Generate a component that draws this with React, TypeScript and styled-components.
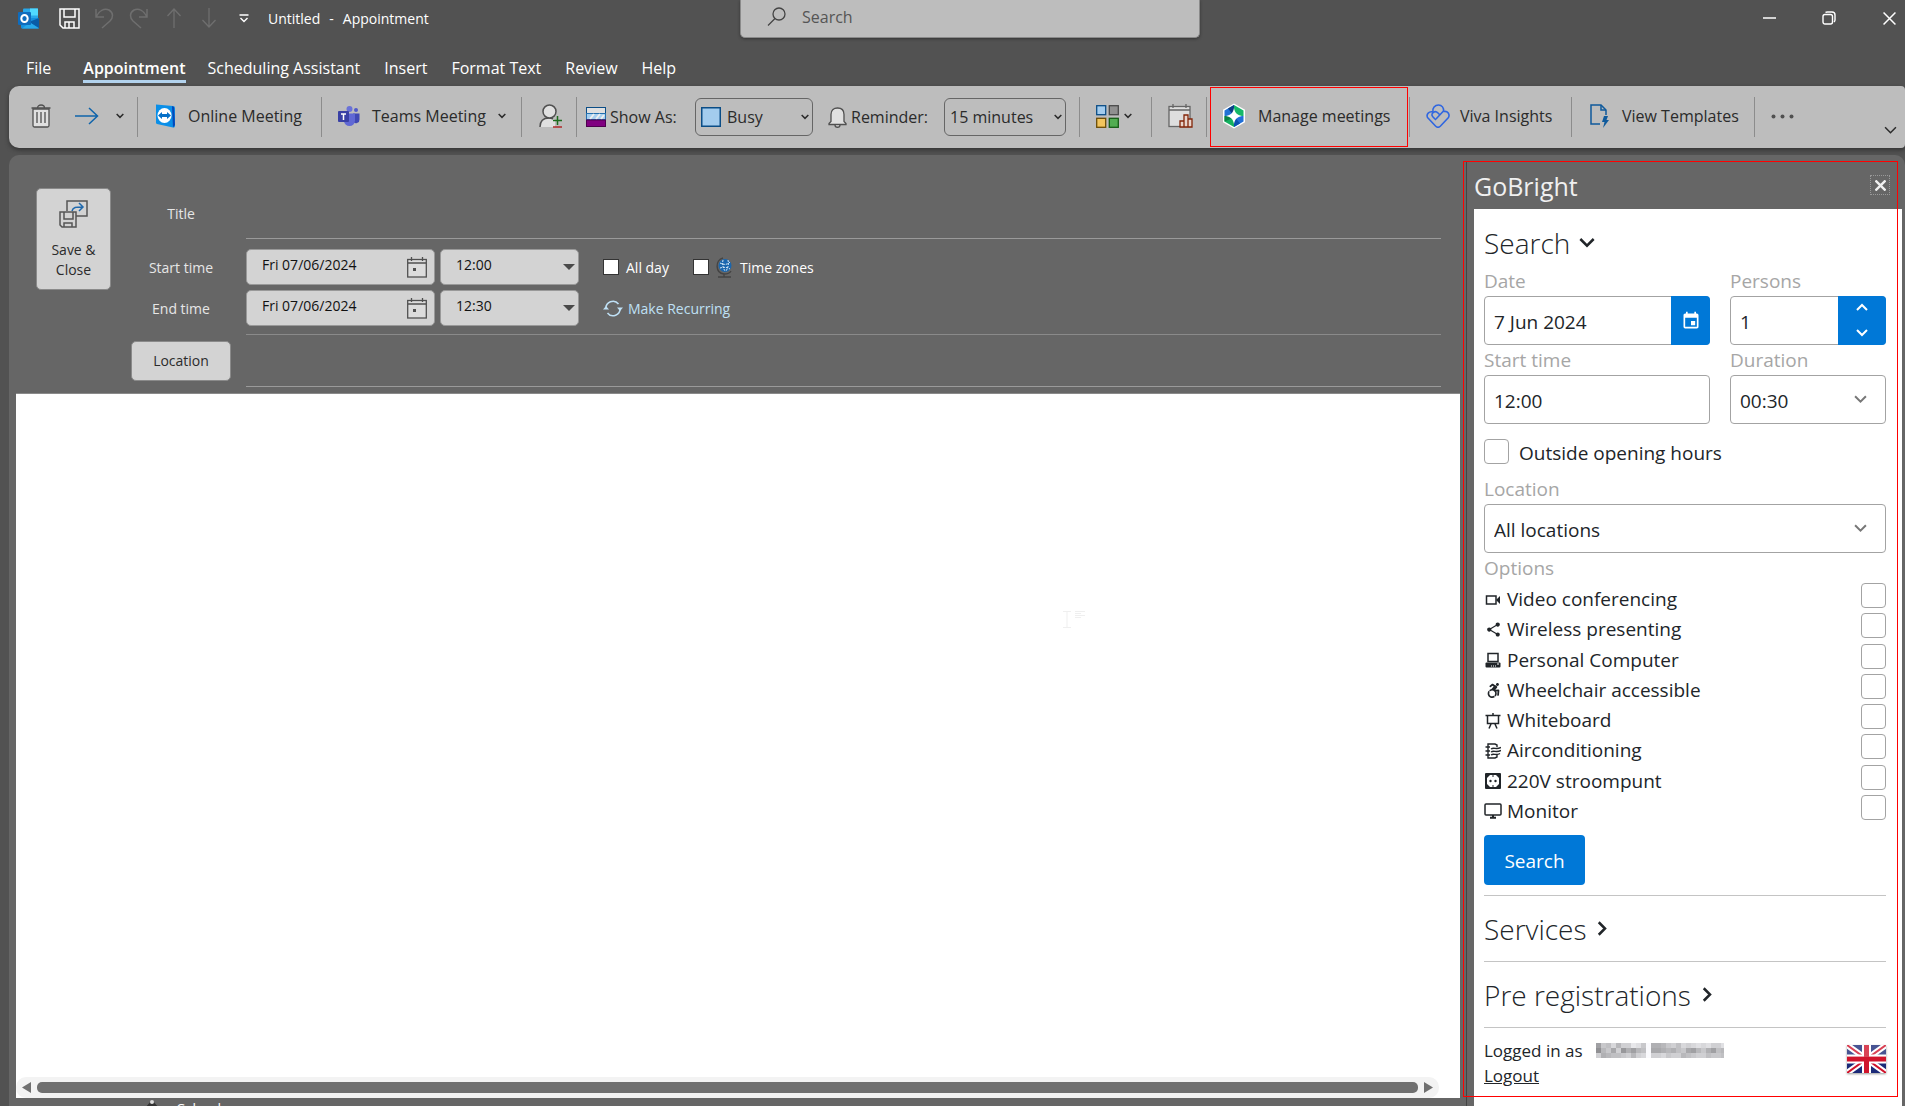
import React from "react";
import styled, { createGlobalStyle, css } from "styled-components";
import { MdShare, MdEvent } from "react-icons/md";
import { FaAccessibleIcon } from "react-icons/fa";

const GlobalStyle = createGlobalStyle`
  *, *::before, *::after { box-sizing: border-box; }
  body {
    margin: 0;
    background: #525252;
    font-family: "Open Sans", "Noto Sans", sans-serif;
    overflow: hidden;
  }
  button, input, select { font: inherit; color: inherit; }
  button { cursor: pointer; }
  svg { display: block; flex: none; }
`;

/* ---------- window frame ---------- */

const Window = styled.div`
  display: flex;
  flex-direction: column;
  height: 100vh;
  overflow: hidden;
  background: #525252;
`;

const TitleBar = styled.header`
  display: grid;
  grid-template-columns: minmax(0, 740fr) 460px minmax(0, 705fr);
  height: 38px;
  color: #fff;
`;

const QuickAccess = styled.div`
  display: flex;
  align-items: center;
  height: 36px;
  padding-left: 18px;
  font-size: 14px;
`;

const PlainButton = styled.button<{ $w: number; $muted?: boolean }>`
  display: flex;
  align-items: center;
  justify-content: center;
  width: ${(p) => p.$w}px;
  height: 30px;
  padding: 0;
  border: 0;
  background: none;
  color: ${(p) => (p.$muted ? "#6f6f6f" : "inherit")};
`;

const WindowTitle = styled.span`
  display: flex;
  gap: 9px;
  margin-left: 19px;
`;

const TopSearch = styled.label`
  display: flex;
  align-items: center;
  gap: 16px;
  height: 38px;
  padding: 0 26px 4px;
  border: 1px solid #8a8a8a;
  border-top: 0;
  border-radius: 0 0 5px 5px;
  background: #bdbdbd;
  color: #444;
  box-shadow: 0 1px 3px #333;
`;

const TopSearchInput = styled.input`
  flex: 1;
  min-width: 0;
  padding: 0;
  border: 0;
  background: none;
  font-size: 16px;
  outline: 0;
  &::placeholder { color: #555; opacity: 1; }
`;

const Caption = styled.div`
  display: flex;
  justify-content: flex-end;
  align-items: center;
  height: 36px;
  margin-right: -14px;
`;

const Tabs = styled.nav`
  display: flex;
  align-items: flex-start;
  height: 48px;
  padding: 16px 0 0 26px;
  gap: 24px;
`;

const Tab = styled.a<{ $active?: boolean }>`
  color: #fff;
  font-size: 16px;
  line-height: 28px;
  height: 29px;
  text-decoration: none;
  ${(p) =>
    p.$active &&
    css`
      margin-left: 8px;
      margin-right: -2px;
      font-weight: 600;
      border-bottom: 3px solid #b3d3ee;
    `}
`;

/* ---------- ribbon ---------- */

const Ribbon = styled.div`
  position: relative;
  display: flex;
  align-items: center;
  height: 62px;
  margin-left: 9px;
  border-radius: 10px 4px 4px 10px;
  background: #bdbdbd;
  color: #2b2b2b;
  font-size: 16px;
  box-shadow: 0 2px 4px #333;
`;

const Group = styled.div<{ $w: number; $pad?: number; $gap?: number }>`
  display: flex;
  align-items: center;
  flex: none;
  width: ${(p) => p.$w}px;
  height: 40px;
  padding-left: ${(p) => p.$pad ?? 16}px;
  gap: ${(p) => p.$gap ?? 12}px;
  border-right: 1px solid #8c8c8c;
`;

const RibbonButton = styled.button<{ $gap?: number }>`
  display: flex;
  align-items: center;
  gap: ${(p) => p.$gap ?? 12}px;
  height: 36px;
  padding: 0 0 2px;
  border: 0;
  background: none;
  white-space: nowrap;
`;

const MoreButton = styled(RibbonButton)`
  margin-left: 16px;
`;

const CollapseButton = styled(RibbonButton)`
  align-self: flex-end;
  margin: 0 8px 0 auto;
  height: 34px;
`;

const ComboLabel = styled.label<{ $w: number }>`
  display: flex;
  align-items: center;
  gap: 4px;
  width: ${(p) => p.$w}px;
  white-space: nowrap;
`;

const Combo = styled.div<{ $w: number }>`
  display: flex;
  align-items: center;
  gap: 6px;
  width: ${(p) => p.$w}px;
  height: 38px;
  padding: 0 3px 0 5px;
  border: 1px solid #666;
  border-radius: 6px;
`;

const ReminderLabel = styled(ComboLabel)`
  margin-left: 15px;
`;

const BareSelect = styled.select`
  flex: 1;
  min-width: 0;
  padding: 0;
  border: 0;
  background: none;
  appearance: none;
  outline: 0;
`;

const Highlight = styled.div`
  position: absolute;
  top: 1px;
  left: 1201px;
  width: 198px;
  height: 60px;
  border: 1px solid #f00;
  pointer-events: none;
`;

/* ---------- appointment form ---------- */

const Body = styled.main`
  display: grid;
  grid-template-columns: minmax(0, 1fr) 445px;
  flex: 1;
  min-height: 0;
  margin: 7px 0 0 9px;
  border-radius: 10px 10px 0 0;
  background: #666;
`;

const Editor = styled.section`
  display: flex;
  flex-direction: column;
  min-width: 0;
  min-height: 0;
`;

const FormArea = styled.form`
  display: grid;
  grid-template-columns: 75px minmax(0, 1fr);
  gap: 20px;
  align-items: start;
  padding: 33px 19px 6px 27px;
  color: #e6e6e6;
  font-size: 14px;
`;

const LightButton = styled.button`
  border: 1px solid #8a8a8a;
  border-radius: 5px;
  background: #d3d3d3;
  color: #2b2b2b;
  font-size: 14px;
  line-height: 20px;
  padding: 0;
`;

const SaveButton = styled(LightButton)`
  display: flex;
  flex-direction: column;
  align-items: center;
  gap: 11px;
  height: 102px;
  padding-top: 10px;
`;

const Fields = styled.div`
  display: grid;
  grid-template-columns: 100px minmax(0, 1fr);
  column-gap: 15px;
`;

const RowLabel = styled.label`
  align-self: center;
  text-align: center;
`;

const LineInput = styled.input<{ $h: number }>`
  width: 100%;
  height: ${(p) => p.$h}px;
  padding: 0 8px;
  border: 0;
  border-bottom: 1px solid #9a9a9a;
  background: none;
  outline: 0;
`;

const TimeRow = styled.div`
  display: flex;
  align-items: center;
  gap: 5px;
`;

const Spacer = styled.div<{ $h: number }>`
  grid-column: 1 / -1;
  height: ${(p) => p.$h}px;
`;

const Divider = styled.hr`
  grid-column: 2;
  width: 100%;
  margin: 0;
  border: 0;
  border-top: 1px solid #8a8a8a;
`;

const FieldBox = styled.div<{ $w: number }>`
  display: flex;
  align-items: center;
  width: ${(p) => p.$w}px;
  height: 36px;
  padding: 0 7px 0 15px;
  border: 1px solid #999;
  border-radius: 5px;
  background: #d3d3d3;
  color: #111;
`;

const FieldInput = styled.input`
  flex: 1;
  min-width: 0;
  padding: 0 0 5px;
  border: 0;
  background: none;
  outline: 0;
`;

const TimeSelect = styled(BareSelect)`
  padding-bottom: 5px;
`;

const Caret = styled.span`
  border: 6px solid transparent;
  border-top-color: #4a4a4a;
  border-bottom: 0;
  margin-right: -4px;
`;

const CheckLabel = styled.label`
  display: flex;
  align-items: center;
  gap: 7px;
  margin-left: 19px;
  color: #fff;
`;

const SquareCheck = styled.input`
  appearance: none;
  width: 16px;
  height: 16px;
  margin: 0;
  border: 1px solid #333;
  background: #fff;
`;

const RecurringButton = styled.button`
  display: flex;
  align-items: center;
  gap: 5px;
  margin-left: 19px;
  padding: 0;
  border: 0;
  background: none;
  color: #bfe0f5;
`;

const LocationButton = styled(LightButton)`
  align-self: center;
  height: 40px;
`;

const Page = styled.div`
  display: flex;
  flex-direction: column;
  justify-content: flex-end;
  flex: 1;
  min-height: 0;
  margin-left: 7px;
  border-top: 1px solid #8a8a8a;
  background: #fff;
`;

const PageText = styled.div`
  flex: 1;
  display: grid;
  place-content: start end;
  padding: 217px 375px 0 0;
`;

const ScrollBar = styled.div`
  display: flex;
  align-items: center;
  gap: 6px;
  height: 21px;
  margin-right: 21px;
  padding: 0 6px;
  border-radius: 10px;
  background: #f3f3f3;
`;

const ScrollThumb = styled.div`
  flex: 1;
  height: 11px;
  border-radius: 5px;
  background: #707070;
`;

const StatusBar = styled.footer`
  display: flex;
  align-items: flex-start;
  gap: 16px;
  flex: none;
  height: 8px;
  padding: 1px 0 0 135px;
  color: #fff;
  font-size: 14px;
  line-height: 20px;
`;

/* ---------- GoBright task pane ---------- */

const Pane = styled.aside`
  position: relative;
  display: flex;
  flex-direction: column;
  min-height: 0;
  margin-top: 6px;
  padding: 0 3px 0 8px;
  border-left: 6px solid #666;
  box-shadow: inset 1px 0 #444;
`;

const PaneOutline = styled.div`
  position: absolute;
  top: 0;
  left: -3px;
  right: 7px;
  bottom: 9px;
  border: 1px solid #f00;
  pointer-events: none;
`;

const PaneHeader = styled.div`
  display: flex;
  align-items: center;
  justify-content: space-between;
  height: 48px;
  padding: 0 12px 0 0;
  color: #f0f0f0;
`;

const PaneTitle = styled.h1`
  margin: 0;
  padding-top: 2px;
  font-size: 25px;
  font-weight: 400;
  line-height: 46px;
`;

const ClosePane = styled.button`
  display: grid;
  place-items: center;
  width: 20px;
  height: 20px;
  padding: 0;
  border: 1px dotted #999;
  background: none;
`;

const PaneBody = styled.div`
  flex: 1;
  min-height: 0;
  padding: 15px 16px 0 10px;
  background: #fff;
  color: #212529;
  font-size: 19px;
`;

const Heading = styled.h2`
  margin: 0;
  font-weight: 300;
  font-size: 28px;
`;

const HeadingButton = styled.button<{ $h: number; $lift?: boolean }>`
  display: flex;
  align-items: center;
  gap: 9px;
  height: ${(p) => p.$h}px;
  padding: 0 0 ${(p) => (p.$lift ? 4 : 0)}px;
  border: 0;
  background: none;
`;

const FieldGrid = styled.div`
  display: grid;
  grid-template-columns: minmax(0, 226fr) minmax(0, 156fr);
  column-gap: 20px;
`;

const PaneField = styled.div`
  display: flex;
  flex-direction: column;
`;

const PaneLabel = styled.label`
  height: 30px;
  color: #a6a6a6;
  line-height: 30px;
`;

const InputBox = styled.div`
  display: flex;
  align-items: center;
  height: 49px;
  padding-left: 9px;
  border: 1px solid #a3a3a3;
  border-radius: 4px;
`;

const PaneInput = styled.input`
  flex: 1;
  min-width: 0;
  align-self: stretch;
  padding: 3px 0 0;
  border: 0;
  background: none;
  outline: 0;
`;

const PaneSelect = styled(BareSelect)`
  align-self: stretch;
  padding-top: 3px;
`;

const SelectMark = styled.span`
  margin-right: 18px;
  color: #777;
`;

const Addon = styled.button<{ $w: number }>`
  display: grid;
  place-items: center;
  width: ${(p) => p.$w}px;
  height: 49px;
  margin-right: -1px;
  padding: 0;
  border: 0;
  border-radius: 0 4px 4px 0;
  background: #0078d7;
  color: #fff;
`;

const Stepper = styled.div`
  display: grid;
  width: 48px;
  height: 49px;
  margin-right: -1px;
  border-radius: 0 4px 4px 0;
  background: #0078d7;
`;

const StepButton = styled.button`
  display: grid;
  place-items: center;
  padding: 0;
  border: 0;
  background: none;
  color: #fff;
`;

const OutsideRow = styled.label`
  display: flex;
  gap: 10px;
  margin: 15px 0 10px;
  line-height: 28px;
  height: 25px;
`;

const Check = styled.input`
  appearance: none;
  flex: none;
  width: 25px;
  height: 25px;
  margin: 0;
  border: 1px solid #a3a3a3;
  border-radius: 4px;
  background: #fff;
`;

const OptionsTitle = styled.div`
  height: 30px;
  color: #a6a6a6;
  line-height: 30px;
`;

const OptionList = styled.div`
  display: grid;
  grid-template-rows: repeat(8, minmax(0, 1fr));
  height: 242px;
`;

const Option = styled.label`
  display: flex;
  align-items: flex-start;
  line-height: 32px;
`;

const OptionIcon = styled.span`
  display: grid;
  place-items: center;
  width: 18px;
  height: 33px;
  margin-right: 5px;
`;

const OptionName = styled.span`
  flex: 1;
`;

const SearchButton = styled.button`
  display: block;
  width: 101px;
  height: 50px;
  margin: 10px 0;
  padding: 2px 0 0;
  border: 0;
  border-radius: 4px;
  background: #0078d7;
  color: #fff;
`;

const Section = styled.section`
  border-top: 1px solid #c4c4c4;
`;

const Account = styled.div`
  display: flex;
  justify-content: space-between;
  padding-top: 10px;
  font-size: 17px;
  line-height: 25px;
  border-top: 1px solid #c4c4c4;
`;

const UserLine = styled.div`
  display: flex;
  align-items: center;
  gap: 13px;
`;

const Logout = styled.a`
  color: inherit;
`;

const Flag = styled.div`
  margin-top: 7px;
  filter: drop-shadow(0 1px 1px #999);
`;

/* ---------- icons ---------- */

type ChevronProps = { w?: number; dir?: "down" | "up" | "right"; stroke?: number };

const Chevron = ({ w = 8, dir = "down", stroke = 1.5 }: ChevronProps) => {
  const paths = {
    down: "M1 3 L6 8 L11 3",
    up: "M1 8 L6 3 L11 8",
    right: "M3 1 L8 6 L3 11",
  };
  return (
    <svg width={w} height={w} viewBox="0 0 12 12" fill="none" stroke="currentColor" strokeWidth={(stroke * 12) / w}>
      <path d={paths[dir]} />
    </svg>
  );
};

const OutlookLogo = () => (
  <svg width="21" height="21" viewBox="0 0 21 21">
    <rect x="5" y="0.500" width="15" height="14" rx="1" fill="#28a8ea" />
    <rect x="12" y="0.500" width="8" height="7" fill="#50d9ff" />
    <path d="M3 10h18v9.500a1 1 0 0 1-1 1H4a1 1 0 0 1-1-1z" fill="#1490df" />
    <path d="M21 10v10L11 14z" fill="#0a5ba6" />
    <path d="M4 20.500l8-6 9 6z" fill="#28a8ea" />
    <rect x="0" y="4" width="13" height="13" rx="1" fill="#0f6cbd" />
    <ellipse cx="6.500" cy="10.500" rx="3.200" ry="3.500" fill="none" stroke="#fff" strokeWidth="2" />
  </svg>
);

const SaveIcon = () => (
  <svg width="21" height="21" viewBox="0 0 21 21" fill="none" stroke="currentColor" strokeWidth="1.500">
    <path d="M1 1h19v19H4l-3-3z" />
    <path d="M5 1v8h11V1M6 20v-6h9v6M10 14v6" />
  </svg>
);

const UndoIcon = ({ flip }: { flip?: boolean }) => (
  <svg width="20" height="21" viewBox="0 0 20 21" fill="none" stroke="currentColor" strokeWidth="1.500">
    <path
      transform={flip ? "translate(20 0) scale(-1 1)" : undefined}
      d="M2 1v8h8M2 9C5 3 10 0 15 2c5 3 4 8 1 11l-8 7"
    />
  </svg>
);

const VertArrow = ({ up }: { up?: boolean }) => (
  <svg width="16" height="21" viewBox="0 0 16 21" fill="none" stroke="currentColor" strokeWidth="1.300">
    <path d={up ? "M8 20V1M1.500 8L8 1l6.500 7" : "M8 0v19M1.500 12L8 19l6.500-7"} />
  </svg>
);

const CustomizeIcon = () => (
  <svg width="10" height="9" viewBox="0 0 10 9" fill="none" stroke="currentColor" strokeWidth="1.400">
    <path d="M0.500 1h9M1.500 4L5 7.500 8.500 4" />
  </svg>
);

const SearchIcon = () => (
  <svg width="19" height="19" viewBox="0 0 19 19" fill="none" stroke="currentColor" strokeWidth="1.300">
    <circle cx="12" cy="7" r="6" />
    <path d="M8 11.500L1 18.500" />
  </svg>
);

const MinimizeIcon = () => (
  <svg width="13" height="13" viewBox="0 0 13 13" stroke="currentColor" strokeWidth="1.500">
    <path d="M0 6h13" />
  </svg>
);

const RestoreIcon = () => (
  <svg width="14" height="14" viewBox="0 0 14 14" fill="none" stroke="currentColor" strokeWidth="1.400">
    <rect x="1" y="3.500" width="9.500" height="9.500" rx="2" />
    <path d="M3.500 1.500C4 1 5 1 5.500 1H10a3 3 0 0 1 3 3v5c0 1-.5 1.500-1 2" />
  </svg>
);

const CloseIcon = ({ size, stroke }: { size: number; stroke: number }) => (
  <svg width={size} height={size} viewBox="0 0 12 12" stroke="currentColor" strokeWidth={stroke}>
    <path d="M0.500 0.500l11 11M11.500 0.500l-11 11" />
  </svg>
);

const TrashIcon = () => (
  <svg width="20" height="24" viewBox="0 0 20 24" fill="none" stroke="#505050" strokeWidth="1.300">
    <path d="M2 5h16v16.500a1.500 1.500 0 0 1-1.500 1.500h-13A1.500 1.500 0 0 1 2 21.500z" fill="#e0e0e0" />
    <path d="M0.500 4h19M6.500 4c0-4 7-4 7 0M6 8v11M10 8v11M14 8v11" />
  </svg>
);

const ForwardIcon = () => (
  <svg width="24" height="18" viewBox="0 0 24 18" fill="none" stroke="#0f64ab" strokeWidth="1.500">
    <path d="M0 9h22.500M14 1l8.500 8L14 17" />
  </svg>
);

const TeamViewerIcon = () => (
  <svg width="21" height="24" viewBox="0 0 21 24">
    <path d="M1 0.500l17 1.500a2 2 0 0 1 2 2v18a1.500 1.500 0 0 1-2 1.500L2 20a1.500 1.500 0 0 1-1-1.500z" fill="#0a8fe8" />
    <path d="M17 2l2 1 1 18-2 2.500z" fill="#0646b8" />
    <ellipse cx="9.500" cy="11.500" rx="7" ry="7.500" fill="#fff" />
    <path d="M3 11.500l4-3.500v2h5V8l4 3.500-4 3.500v-2H7v2z" fill="#0670c8" />
  </svg>
);

const TeamsIcon = () => (
  <svg width="22" height="20" viewBox="0 0 22 20">
    <circle cx="11.500" cy="3" r="3" fill="#6a72d8" />
    <circle cx="18" cy="4" r="2" fill="#5059c9" />
    <path d="M15 7.500h6.500v6a3.500 3.500 0 0 1-6.500 2z" fill="#4048b4" />
    <path d="M6 7.500h11v7a5.500 5.500 0 0 1-11 0z" fill="#6068d4" />
    <rect x="0" y="5" width="11" height="11" rx="1" fill="#3940a5" />
    <path d="M3 8h5M5.500 8v6" stroke="#fff" strokeWidth="1.500" />
  </svg>
);

const PersonIcon = () => (
  <svg width="23" height="24" viewBox="0 0 23 24" fill="none">
    <path d="M1 23c0-6 3-9 9-9 3 0 5 1 6 2v7z" fill="#e0e0e0" />
    <path d="M1 23c0-6 3-9 9-9 2 0 3 .4 4 1" stroke="#505050" strokeWidth="1.500" />
    <circle cx="10.500" cy="7.500" r="6.500" fill="#e0e0e0" stroke="#505050" strokeWidth="1.500" />
    <path d="M18.500 12v9M14 16.500h9" stroke="#1d6b1d" strokeWidth="1.500" />
    <path d="M14 23h9" stroke="#b02a2a" strokeWidth="1.500" />
  </svg>
);

const ShowAsIcon = () => (
  <svg width="20" height="20" viewBox="0 0 20 20">
    <rect x="0.500" y="0.500" width="19" height="6" fill="#e0e0e0" stroke="#0b4d86" />
    <rect x="0.500" y="6.500" width="19" height="6" fill="#a6cff0" stroke="#2470ae" />
    <path d="M4 12l4-5M10 12l4-5M15 12l3-4" stroke="#eee" strokeWidth="2" />
    <rect x="0.500" y="13" width="19" height="6.500" fill="#800080" stroke="#4d004d" />
  </svg>
);

const BusySwatch = () => (
  <svg width="20" height="20" viewBox="0 0 20 20">
    <rect x="0.750" y="0.750" width="18.500" height="18.500" fill="#a3ccee" stroke="#0b4d86" strokeWidth="1.500" />
  </svg>
);

const BellIcon = () => (
  <svg width="19" height="21" viewBox="0 0 19 21" fill="#e0e0e0" stroke="#505050" strokeWidth="1.300">
    <path d="M7 18c0 3 5 3 5 0" />
    <path d="M1 17.500v-1l2-2V7.500C3 3 6 1 9.500 1S16 3 16 7.500v7l2 2v1z" />
  </svg>
);

const CategoriesIcon = () => (
  <svg width="23" height="23" viewBox="0 0 23 23" strokeWidth="1.300">
    <rect x="0.700" y="0.700" width="9" height="9" fill="#a3ccee" stroke="#0b4d86" />
    <rect x="13.300" y="0.700" width="9" height="9" fill="#909090" stroke="#4a4a4a" />
    <rect x="0.700" y="13.300" width="9" height="9" fill="#f2c55e" stroke="#6b4c06" />
    <rect x="13.300" y="13.300" width="9" height="9" fill="#52ad52" stroke="#165c16" />
  </svg>
);

const PollIcon = () => (
  <svg width="25" height="25" viewBox="0 0 25 25" fill="none" strokeWidth="1.300">
    <rect x="1" y="2.500" width="21" height="20" fill="#dedede" stroke="#666" />
    <path d="M1 6h21M5 0v4M18 0v4" stroke="#666" />
    <path d="M12 23v-6h4v6zM16 23V11h4v12zM20 23v-8h4v8z" fill="#e8d5cd" stroke="#822509" />
  </svg>
);

const GoBrightLogo = () => (
  <svg width="24" height="26" viewBox="0 0 24 26">
    <path d="M12 0.500l11 6.200v12.600L12 25.500 1 19.300V6.700z" fill="#fff" />
    <path d="M12 2l9.500 5.500V13H12z" fill="#15b868" />
    <path d="M12 2L2.500 7.500V13H12z" fill="#2372d6" />
    <path d="M12 2L6 5.500 12 13z" fill="#0b3f86" />
    <path d="M21.500 13v5.500L12 24V13z" fill="#1f6fd8" />
    <path d="M12 24l6-3.500L12 13z" fill="#0b50b0" />
    <path d="M12 24l-9.500-5.500V13H12z" fill="#15b060" />
    <path d="M2.500 13v5.500l5-2L12 13z" fill="#0c8146" />
    <path d="M12 5c1 5 3 7 8 8-5 1-7 3-8 8-1-5-3-7-8-8 5-1 7-3 8-8z" fill="#fff" />
  </svg>
);

const VivaIcon = () => (
  <svg width="24" height="24" viewBox="0 0 24 24" fill="none" stroke="#2f66e0" strokeWidth="1.600" strokeLinejoin="round">
    <path d="M10 16l-3-3c-2-2-1-4 1-5 2-1 3 0 4 1l2 2" />
    <path d="M7 8C6 4 9 1 12.500 1S18 4 17.500 7L10 15" />
    <path d="M7 8C3 7 0 10 1.500 13.500L9.500 22c1.500 1.500 3.500 1.500 5 0l8-8.500c1.500-3-.5-7-5-6" />
  </svg>
);

const TemplateIcon = () => (
  <svg width="20" height="25" viewBox="0 0 20 25" fill="none" stroke="#0f5a9c" strokeWidth="1.500">
    <path d="M10 20H1V1h10l5 5v5" />
    <path d="M11 1v5h5" />
    <path d="M14 12h4l-1.500 4H19l-6 8 1.500-6H12z" fill="#0f5a9c" stroke="none" />
  </svg>
);

const DotsIcon = () => (
  <svg width="23" height="5" viewBox="0 0 23 5" fill="#505050">
    <circle cx="2.500" cy="2.500" r="2" />
    <circle cx="11.500" cy="2.500" r="2" />
    <circle cx="20.500" cy="2.500" r="2" />
  </svg>
);

const SaveCloseIcon = () => (
  <svg width="30" height="30" viewBox="0 0 30 30" fill="none" stroke="#555" strokeWidth="1.500">
    <path d="M8 12V2h20v15H17" />
    <path d="M13 12c1-4 4-4 10-4M20 4l4 4-4 4" stroke="#1f69ad" />
    <path d="M1 13h16v15H3l-2-2z" />
    <path d="M5 13v7h9v-7M5 28v-4h8v4" />
  </svg>
);

const CalendarIcon = () => (
  <svg width="20" height="21" viewBox="0 0 20 21" fill="none" stroke="#505050" strokeWidth="1.300">
    <rect x="0.700" y="2.500" width="18.600" height="17.500" fill="#dcdcdc" />
    <path d="M1 6h18M4.500 0v4M15.500 0v4" />
    <rect x="6" y="11" width="3" height="3" fill="#505050" stroke="none" />
  </svg>
);

const GlobeIcon = () => (
  <svg width="17" height="21" viewBox="0 0 17 21" fill="none">
    <path d="M7 1C-1 3-1 16 8 17c4 0 6-1 7-3M8 17v3M2 20h13" stroke="#444" strokeWidth="1.400" />
    <circle cx="9" cy="8.500" r="6.500" fill="#1a66ae" />
    <path d="M4 6c4 2 7 2 10-1M4 11c3-1 7-1 10 1M7 3c-1 4 0 8 2 11M12 3c1 4 0 8-2 11" stroke="#d5e8f6" strokeDasharray="2 1" />
  </svg>
);

const RecurIcon = () => (
  <svg width="20" height="17" viewBox="0 0 20 17" fill="none" stroke="currentColor" strokeWidth="1.500">
    <path d="M3 9a7 7 0 0 1 12.500-5M17 8a7 7 0 0 1-12.500 5" />
    <path d="M0 9.500h6L3 6zM14 7.500h6L17 11z" fill="currentColor" stroke="none" />
  </svg>
);

const FolderIcon = () => (
  <svg width="16" height="16" viewBox="0 0 16 16">
    <path d="M8 1L1 9h14z" fill="#333" />
    <circle cx="8" cy="3" r="2" fill="#ddd" />
  </svg>
);

const PointerMark = () => (
  <svg width="22" height="17" viewBox="0 0 22 17" stroke="#efefef" fill="none">
    <path d="M0 0.500h8M0 16.500h8M4 0.500v16M12 0.500h10M12 2.500h6M12 4.500h10M12 6.500h6" />
  </svg>
);

const VideoIcon = () => (
  <svg width="16" height="12" viewBox="0 0 16 12">
    <rect x="1.500" y="2" width="9.500" height="8" fill="none" stroke="currentColor" strokeWidth="1.500" />
    <path d="M11 6l4-4v8z" fill="currentColor" />
  </svg>
);

const ComputerIcon = () => (
  <svg width="16" height="16" viewBox="0 0 16 16">
    <rect x="3" y="1.500" width="10" height="8" fill="none" stroke="currentColor" strokeWidth="1.500" />
    <rect x="0.500" y="10.500" width="15" height="5" rx="1" fill="currentColor" />
    <path d="M6 14h1M8 14h1M10 14h1M12 12h2" stroke="#fff" />
  </svg>
);

const BoardIcon = () => (
  <svg width="16" height="16" viewBox="0 0 16 16" fill="none" stroke="currentColor" strokeWidth="1.500">
    <path d="M0.500 2.500h15M2.500 2.500v8h11v-8M8 0v2M6 11l-2 4.500M10 11l2 4.500" />
  </svg>
);

const AirIcon = () => (
  <svg width="16" height="16" viewBox="0 0 16 16" fill="none" stroke="currentColor" strokeWidth="1.400">
    <path d="M12 4V2L10 1H3v14h7l2-1v-2M0.500 4H5M0.500 8H5M0.500 12H5" />
    <path d="M6 6c3-2 5 1 10-1.500M6 9c3-2 5 1 10-1.500M6 12c3-2 5 1 9-1.500" />
  </svg>
);

const SocketIcon = () => (
  <svg width="16" height="16" viewBox="0 0 16 16">
    <rect width="16" height="16" rx="1" fill="currentColor" />
    <path d="M5 2h6l3 3v6l-3 3H5l-3-3V5z" fill="#fff" />
    <circle cx="5.500" cy="8" r="1.200" fill="currentColor" />
    <circle cx="10.500" cy="8" r="1.200" fill="currentColor" />
    <path d="M8 2v2M8 12v2" stroke="currentColor" />
  </svg>
);

const MonitorIcon = () => (
  <svg width="18" height="16" viewBox="0 0 18 16" fill="none" stroke="currentColor" strokeWidth="1.500">
    <rect x="1" y="1" width="16" height="11" rx="1" />
    <path d="M9 12v2.500M6 14.800h6" strokeWidth="2" />
  </svg>
);

const FlagIcon = () => (
  <svg width="39" height="28" viewBox="0 0 39 28">
    <rect width="39" height="28" fill="#1b2a78" />
    <path d="M0 0l39 28M39 0L0 28" stroke="#fff" strokeWidth="6" />
    <path d="M0 0l39 28M39 0L0 28" stroke="#d0142c" strokeWidth="2" />
    <path d="M19.500 0v28M0 14h39" stroke="#fff" strokeWidth="9" />
    <path d="M19.500 0v28M0 14h39" stroke="#d0142c" strokeWidth="5" />
    <rect width="39" height="12" fill="#fff" opacity="0.200" />
  </svg>
);

const mosaicRows = [
  "5a9c8bbeda0778ab9cbcdcdbbd",
  "38a6b475890667879a658a7598",
  "b7899ab8bc0bbcabb89abb9aa9",
];

const NameMosaic = () => (
  <svg width="128" height="15" viewBox="0 0 128 15" aria-hidden="true">
    {mosaicRows.map((row, y) =>
      row.split("").map((c, x) => {
        const v = c === "0" ? 250 : 120 + parseInt(c, 16) * 8;
        return <rect key={`${x}-${y}`} x={x * 5} y={y * 5} width="5" height="5" fill={`rgb(${v},${v},${v + 3})`} />;
      })
    )}
  </svg>
);

/* ---------- content ---------- */

const options: { name: string; icon: React.ReactNode }[] = [
  { name: "Video conferencing", icon: <VideoIcon /> },
  { name: "Wireless presenting", icon: <MdShare size={17} /> },
  { name: "Personal Computer", icon: <ComputerIcon /> },
  { name: "Wheelchair accessible", icon: <FaAccessibleIcon size={15} /> },
  { name: "Whiteboard", icon: <BoardIcon /> },
  { name: "Airconditioning", icon: <AirIcon /> },
  { name: "220V stroompunt", icon: <SocketIcon /> },
  { name: "Monitor", icon: <MonitorIcon /> },
];

const tabs = ["File", "Appointment", "Scheduling Assistant", "Insert", "Format Text", "Review", "Help"];

const TimeLine = ({ id, time }: { id: string; time: string }) => (
  <>
    <FieldBox $w={189}>
      <FieldInput id={id} defaultValue="Fri 07/06/2024" />
      <CalendarIcon />
    </FieldBox>
    <FieldBox $w={139}>
      <TimeSelect aria-label={`${id} hour`} defaultValue={time}>
        <option>{time}</option>
      </TimeSelect>
      <Caret />
    </FieldBox>
  </>
);

const AppointmentForm = () => (
  <FormArea onSubmit={(e) => e.preventDefault()}>
    <SaveButton type="button">
      <SaveCloseIcon />
      <span>
        Save &amp;
        <br />
        Close
      </span>
    </SaveButton>
    <Fields>
      <RowLabel htmlFor="title">Title</RowLabel>
      <LineInput id="title" $h={51} />
      <Spacer $h={10} />
      <RowLabel htmlFor="start">Start time</RowLabel>
      <TimeRow>
        <TimeLine id="start" time="12:00" />
        <CheckLabel>
          <SquareCheck type="checkbox" />
          All day
        </CheckLabel>
        <CheckLabel>
          <SquareCheck type="checkbox" />
          <GlobeIcon />
          Time zones
        </CheckLabel>
      </TimeRow>
      <Spacer $h={5} />
      <RowLabel htmlFor="end">End time</RowLabel>
      <TimeRow>
        <TimeLine id="end" time="12:30" />
        <RecurringButton type="button">
          <RecurIcon />
          Make Recurring
        </RecurringButton>
      </TimeRow>
      <Spacer $h={8} />
      <Divider />
      <LocationButton type="button">Location</LocationButton>
      <LineInput aria-label="Location" $h={52} />
    </Fields>
  </FormArea>
);

const TaskPane = () => (
  <Pane>
    <PaneHeader>
      <PaneTitle>GoBright</PaneTitle>
      <ClosePane aria-label="Close pane">
        <CloseIcon size={11} stroke={2.6} />
      </ClosePane>
    </PaneHeader>
    <PaneBody>
      <Heading>
        <HeadingButton $h={42} $lift>
          Search <Chevron w={16} stroke={2.5} />
        </HeadingButton>
      </Heading>
      <FieldGrid>
        <PaneField>
          <PaneLabel htmlFor="date">Date</PaneLabel>
          <InputBox>
            <PaneInput id="date" defaultValue="7 Jun 2024" />
            <Addon $w={39} aria-label="Pick a date">
              <MdEvent size={20} />
            </Addon>
          </InputBox>
        </PaneField>
        <PaneField>
          <PaneLabel htmlFor="persons">Persons</PaneLabel>
          <InputBox>
            <PaneInput id="persons" defaultValue="1" />
            <Stepper>
              <StepButton aria-label="More persons">
                <Chevron w={12} dir="up" stroke={2} />
              </StepButton>
              <StepButton aria-label="Fewer persons">
                <Chevron w={12} stroke={2} />
              </StepButton>
            </Stepper>
          </InputBox>
        </PaneField>
        <PaneField>
          <PaneLabel htmlFor="from">Start time</PaneLabel>
          <InputBox>
            <PaneInput id="from" defaultValue="12:00" />
          </InputBox>
        </PaneField>
        <PaneField>
          <PaneLabel htmlFor="duration">Duration</PaneLabel>
          <InputBox>
            <PaneSelect id="duration">
              <option>00:30</option>
            </PaneSelect>
            <SelectMark>
              <Chevron w={13} stroke={2} />
            </SelectMark>
          </InputBox>
        </PaneField>
      </FieldGrid>
      <OutsideRow>
        <Check type="checkbox" />
        Outside opening hours
      </OutsideRow>
      <PaneField>
        <PaneLabel htmlFor="location">Location</PaneLabel>
        <InputBox>
          <PaneSelect id="location">
            <option>All locations</option>
          </PaneSelect>
          <SelectMark>
            <Chevron w={13} stroke={2} />
          </SelectMark>
        </InputBox>
      </PaneField>
      <OptionsTitle>Options</OptionsTitle>
      <OptionList>
        {options.map((o) => (
          <Option key={o.name}>
            <OptionIcon>{o.icon}</OptionIcon>
            <OptionName>{o.name}</OptionName>
            <Check type="checkbox" />
          </Option>
        ))}
      </OptionList>
      <SearchButton>Search</SearchButton>
      <Section>
        <Heading>
          <HeadingButton $h={65}>
            Services <Chevron w={15} dir="right" stroke={2.5} />
          </HeadingButton>
        </Heading>
      </Section>
      <Section>
        <Heading>
          <HeadingButton $h={65}>
            Pre registrations <Chevron w={15} dir="right" stroke={2.5} />
          </HeadingButton>
        </Heading>
      </Section>
      <Account>
        <div>
          <UserLine>
            Logged in as <NameMosaic />
          </UserLine>
          <Logout href="#logout">Logout</Logout>
        </div>
        <Flag>
          <FlagIcon />
        </Flag>
      </Account>
    </PaneBody>
    <PaneOutline />
  </Pane>
);

const RibbonBar = () => (
  <Ribbon>
    <Group $w={129} $pad={22} $gap={24}>
      <RibbonButton aria-label="Delete">
        <TrashIcon />
      </RibbonButton>
      <RibbonButton aria-label="Forward" $gap={17}>
        <ForwardIcon />
        <Chevron />
      </RibbonButton>
    </Group>
    <Group $w={184} $pad={17}>
      <RibbonButton>
        <TeamViewerIcon />
        Online Meeting
      </RibbonButton>
    </Group>
    <Group $w={200} $pad={16}>
      <RibbonButton>
        <TeamsIcon />
        Teams Meeting
        <Chevron />
      </RibbonButton>
    </Group>
    <Group $w={55} $pad={17}>
      <RibbonButton aria-label="Add people">
        <PersonIcon />
      </RibbonButton>
    </Group>
    <Group $w={503} $pad={9} $gap={0}>
      <ComboLabel htmlFor="showas" $w={109}>
        <ShowAsIcon />
        Show As:
      </ComboLabel>
      <Combo $w={118}>
        <BusySwatch />
        <BareSelect id="showas">
          <option>Busy</option>
        </BareSelect>
        <Chevron />
      </Combo>
      <ReminderLabel htmlFor="reminder" $w={116}>
        <BellIcon />
        Reminder:
      </ReminderLabel>
      <Combo $w={122}>
        <BareSelect id="reminder">
          <option>15 minutes</option>
        </BareSelect>
        <Chevron />
      </Combo>
    </Group>
    <Group $w={72}>
      <RibbonButton aria-label="Categorize" $gap={5}>
        <CategoriesIcon />
        <Chevron />
      </RibbonButton>
    </Group>
    <Group $w={55}>
      <RibbonButton aria-label="Scheduling poll">
        <PollIcon />
      </RibbonButton>
    </Group>
    <Group $w={203} $pad={15}>
      <RibbonButton>
        <GoBrightLogo />
        Manage meetings
      </RibbonButton>
    </Group>
    <Group $w={162}>
      <RibbonButton $gap={10}>
        <VivaIcon />
        Viva Insights
      </RibbonButton>
    </Group>
    <Group $w={183} $pad={18}>
      <RibbonButton>
        <TemplateIcon />
        View Templates
      </RibbonButton>
    </Group>
    <MoreButton aria-label="More commands">
      <DotsIcon />
    </MoreButton>
    <CollapseButton aria-label="Collapse ribbon">
      <Chevron w={13} />
    </CollapseButton>
    <Highlight />
  </Ribbon>
);

export default function App() {
  return (
    <Window>
      <GlobalStyle />
      <TitleBar>
        <QuickAccess>
          <OutlookLogo />
          <PlainButton $w={60} aria-label="Save"><SaveIcon /></PlainButton>
          <PlainButton $w={10} $muted aria-label="Undo"><UndoIcon /></PlainButton>
          <PlainButton $w={60} $muted aria-label="Redo"><UndoIcon flip /></PlainButton>
          <PlainButton $w={10} $muted aria-label="Previous"><VertArrow up /></PlainButton>
          <PlainButton $w={60} $muted aria-label="Next"><VertArrow /></PlainButton>
          <PlainButton $w={10} aria-label="Customize toolbar"><CustomizeIcon /></PlainButton>
          <WindowTitle>
            <span>Untitled</span>
            <span>-</span>
            <span>Appointment</span>
          </WindowTitle>
        </QuickAccess>
        <TopSearch>
          <SearchIcon />
          <TopSearchInput placeholder="Search" />
        </TopSearch>
        <Caption>
          <PlainButton $w={60} aria-label="Minimize"><MinimizeIcon /></PlainButton>
          <PlainButton $w={60} aria-label="Restore"><RestoreIcon /></PlainButton>
          <PlainButton $w={60} aria-label="Close"><CloseIcon size={13} stroke={1.4} /></PlainButton>
        </Caption>
      </TitleBar>
      <Tabs>
        {tabs.map((t) => (
          <Tab key={t} href={`#${t}`} $active={t === "Appointment"}>
            {t}
          </Tab>
        ))}
      </Tabs>
      <RibbonBar />
      <Body>
        <Editor>
          <AppointmentForm />
          <Page>
            <PageText>
              <PointerMark />
            </PageText>
            <ScrollBar>
              <svg width="9" height="11" viewBox="0 0 9 11"><path d="M0 5.500L9 0v11z" fill="#707070" /></svg>
              <ScrollThumb />
              <svg width="9" height="11" viewBox="0 0 9 11"><path d="M9 5.500L0 0v11z" fill="#707070" /></svg>
            </ScrollBar>
          </Page>
          <StatusBar>
            <FolderIcon />
            Calendar
          </StatusBar>
        </Editor>
        <TaskPane />
      </Body>
    </Window>
  );
}
